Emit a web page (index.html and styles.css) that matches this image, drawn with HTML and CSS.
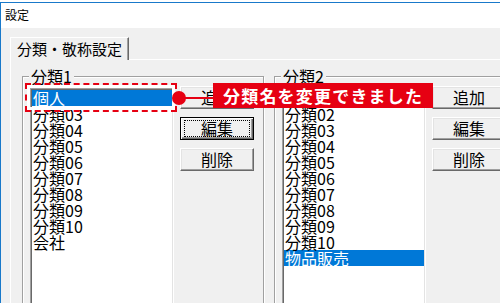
FILE: index.html
```html
<!DOCTYPE html>
<html lang="ja">
<head>
    <meta charset="UTF-8">
    <meta name="viewport" content="width=device-width, initial-scale=1.0">
    <title>設定</title>
    <link rel="stylesheet" href="styles.css">
</head>
<body>

<div class="window">
    <div class="titlebar">設定</div>
    <div class="client">
        <div class="tabs">
            <div class="tab">分類・敬称設定</div>
        </div>
        <div class="panel">
            <fieldset class="group">
                <legend>分類1</legend>
                <div class="group-body">
                    <ul class="listbox">
                        <li class="sel">個人</li>
                        <li>分類03</li>
                        <li>分類04</li>
                        <li>分類05</li>
                        <li>分類06</li>
                        <li>分類07</li>
                        <li>分類08</li>
                        <li>分類09</li>
                        <li>分類10</li>
                        <li>会社</li>
                    </ul>
                    <div class="buttons">
                        <button class="btn">追加</button>
                        <button class="btn default"><span class="focus">編集</span></button>
                        <button class="btn">削除</button>
                    </div>
                </div>
            </fieldset>
            <fieldset class="group">
                <legend>分類2</legend>
                <div class="group-body">
                    <ul class="listbox">
                        <li>分類01</li>
                        <li>分類02</li>
                        <li>分類03</li>
                        <li>分類04</li>
                        <li>分類05</li>
                        <li>分類06</li>
                        <li>分類07</li>
                        <li>分類08</li>
                        <li>分類09</li>
                        <li>分類10</li>
                        <li class="sel">物品販売</li>
                    </ul>
                    <div class="buttons">
                        <button class="btn">追加</button>
                        <button class="btn">編集</button>
                        <button class="btn">削除</button>
                    </div>
                </div>
            </fieldset>
        </div>
    </div>

    <!-- annotation over the dialog -->
    <div class="highlight"></div>
    <div class="callout">
        <span class="dot"></span>
        <span class="line"></span>
        <span class="banner">分類名を変更できました</span>
    </div>
</div>

</body>
</html>
```

FILE: styles.css
```css
* {
    box-sizing: border-box;
}
body {
    margin: 0;
    width: 500px;
    height: 303px;
    overflow: hidden;
    background-color: #ffffff;
    font-family: "Noto Sans CJK JP", "Noto Sans", sans-serif;
    color: #000000;
}
.window {
    position: relative;
    margin-top: 2px;
    height: 301px;
    border-top: 1px solid #1979ca;
    border-left: 1px solid #1979ca;
}
.titlebar {
    height: 25px;
    padding-left: 4px;
    font-size: 12px;
    line-height: 23px;
    background-color: #ffffff;
}
.client {
    height: 280px;
    padding: 9px 0 0 9px;
    background-color: #f0f0f0;
}
.tabs {
    display: flex;
}
.tab {
    position: relative;
    height: 23px;
    margin-bottom: -1px;
    padding: 0 6px;
    font-size: 15px;
    line-height: 21px;
    white-space: nowrap;
    background-color: #f0f0f0;
    border: 1px solid #ffffff;
    border-right-color: #696969;
    border-bottom: none;
    box-shadow: inset -1px 0 0 #a0a0a0;
}
.panel {
    display: flex;
    align-items: flex-start;
    gap: 10px;
    height: 260px;
    padding: 7px 0 0 11px;
    border-top: 1px solid #ffffff;
    border-left: 1px solid #ffffff;
}
.group {
    flex-shrink: 0;
    min-width: 0;
    width: 242px;
    height: 250px;
    margin: 0;
    padding: 3px 9px 0 7px;
    border: 1px solid #a0a0a0;
    box-shadow: inset 1px 1px 0 #ffffff, 1px 1px 0 #ffffff;
}
.group legend {
    margin-left: -1px;
    padding: 0 2px;
    font-size: 16px;
    line-height: 18px;
    background-color: #f0f0f0;
}
.group-body {
    display: flex;
    gap: 6px;
}
.listbox {
    flex-shrink: 0;
    width: 144px;
    height: 230px;
    margin: 0;
    padding: 0;
    list-style: none;
    background-color: #ffffff;
    border: 1px solid;
    border-color: #a0a0a0 #ffffff #ffffff #a0a0a0;
    box-shadow: inset 1px 1px 0 #696969, inset -1px -1px 0 #e3e3e3;
}
.listbox li {
    height: 16px;
    margin: 0 1px;
    padding-left: 1px;
    font-size: 16px;
    line-height: 16px;
    white-space: nowrap;
}
.listbox li:first-child {
    margin-top: 1px;
}
.listbox li.sel {
    background-color: #0078d7;
    color: #ffffff;
}
.buttons {
    display: flex;
    flex-direction: column;
    gap: 8px;
    margin-top: -2px;
}
.btn {
    width: 74px;
    height: 23px;
    padding: 0;
    font-family: inherit;
    font-size: 16px;
    line-height: 19px;
    color: #000000;
    background-color: #f0f0f0;
    border: 1px solid;
    border-color: #ffffff #696969 #696969 #ffffff;
    box-shadow: inset -1px -1px 0 #a0a0a0, inset 1px 1px 0 #e3e3e3;
}
.btn.default {
    border-color: #000000;
    box-shadow: inset 1px 1px 0 #ffffff, inset -1px -1px 0 #696969, inset -2px -2px 0 #a0a0a0;
}
.btn .focus {
    display: block;
    margin: 2px 3px;
    line-height: 15px;
    border: 1px dotted #000000;
}
.highlight {
    position: absolute;
    left: 24px;
    top: 80px;
    width: 152px;
    height: 29px;
    border: 2px dashed #e60012;
    box-shadow: inset 0 0 0 3px #ffffff;
}
.callout {
    position: absolute;
    left: 171px;
    top: 80px;
    display: flex;
    align-items: flex-start;
}
.dot {
    width: 14px;
    height: 14px;
    margin-top: 8px;
    border-radius: 50%;
    background-color: #e60012;
}
.line {
    width: 28px;
    height: 2px;
    margin-top: 14px;
    margin-left: -1px;
    background-color: #e60012;
}
.banner {
    height: 25px;
    padding: 0 10px 0 10px;
    font-size: 17px;
    font-weight: bold;
    line-height: 25px;
    letter-spacing: 1.2px;
    white-space: nowrap;
    color: #ffffff;
    background-color: #e60012;
}
```
